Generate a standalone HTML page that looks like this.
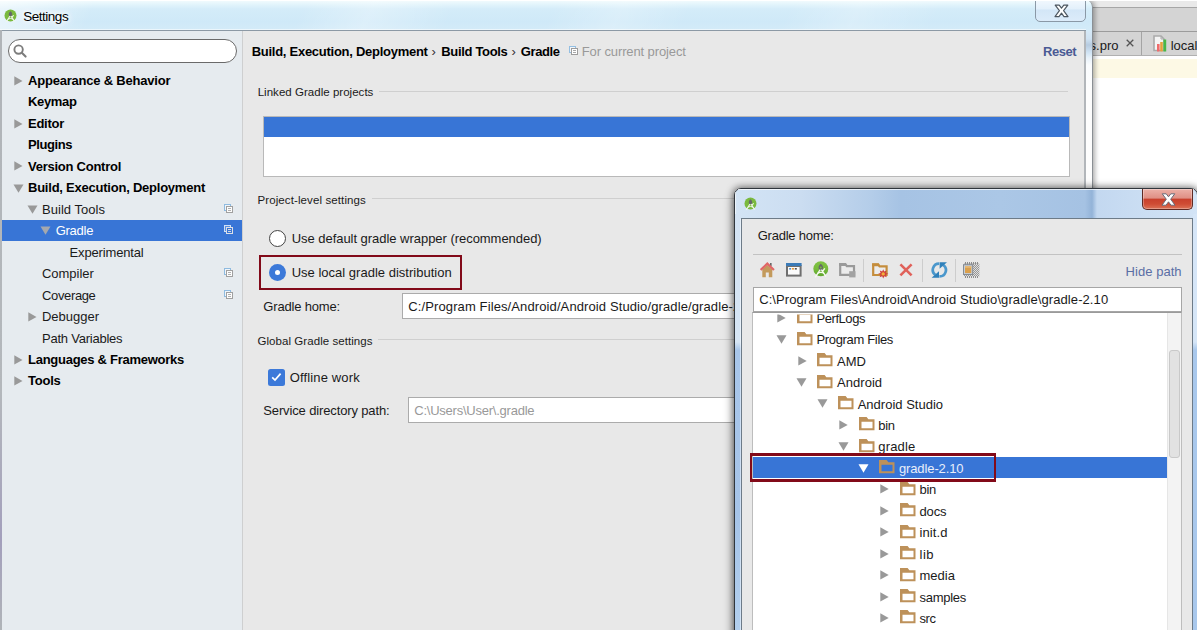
<!DOCTYPE html>
<html><head><meta charset="utf-8"><title>Settings</title>
<style>
html,body{margin:0;padding:0}
body{width:1199px;height:630px;overflow:hidden;position:relative;background:#fff;font-family:"Liberation Sans",sans-serif;}
.a{position:absolute;display:block}
.t{position:absolute;white-space:nowrap}
.glow{text-shadow:0 0 6px #fff,0 0 6px #fff,0 0 10px #fff}
#root{position:absolute;left:0;top:0;width:1199px;height:630px;overflow:hidden}
</style></head><body>
<div id="root">

<!-- ===== IDE background on the right ===== -->
<div class="a" style="left:1086px;top:0;width:113px;height:630px;background:#fff"></div>
<div class="a" style="left:1086px;top:1px;width:113px;height:6px;background:#e9e9e9"></div>
<div class="a" style="left:1086px;top:7px;width:113px;height:1px;background:#a6a6a6"></div>
<div class="a" style="left:1086px;top:8px;width:113px;height:47px;background:#d4d4d4"></div>
<div class="a" style="left:1086px;top:31px;width:113px;height:1px;background:#9c9c9c"></div>
<div class="a" style="left:1086px;top:55px;width:113px;height:1px;background:#b0b0b0"></div>
<div class="a" style="left:1141px;top:32px;width:1px;height:23px;background:#a4a4a4"></div>
<div class="a" style="left:1086px;top:59px;width:113px;height:18.5px;background:#fdf9e5"></div>
<!-- tab close x -->
<svg class="a" style="left:1126px;top:39px" width="8" height="8" viewBox="0 0 8 8"><path d="M0.7 0.7L7.3 7.3M7.3 0.7L0.7 7.3" stroke="#555" stroke-width="1.3" fill="none"/></svg>
<!-- file icon -->
<svg class="a" style="left:1153px;top:35px" width="15" height="17" viewBox="0 0 15 17"><path d="M1 1H8L11 4V15.5H1Z" fill="#f4f4f4" stroke="#aaa" stroke-width="1.6"/><path d="M8 1V4H11" fill="none" stroke="#aaa" stroke-width="1"/><rect x="4" y="9" width="2.6" height="7.5" fill="#ef6b6b"/><rect x="7.2" y="7" width="2.6" height="9.5" fill="#e6a03c"/><rect x="10.4" y="4.5" width="2.8" height="12" fill="#48b848"/></svg>

<span class="t" style="left:1089.6px;top:39.0px;font-size:13px;line-height:13px;color:#1a1a1a;">s.pro</span>
<span class="t" style="left:1170.7px;top:39.0px;font-size:13px;line-height:13px;color:#1a1a1a;">local</span>
<!-- ===== Settings window ===== -->
<div class="a" style="left:0;top:0;width:1091.6px;height:640px;background:linear-gradient(115deg,rgba(255,255,255,.55) 0,rgba(255,255,255,0) 7%,rgba(255,255,255,0) 22%,rgba(255,255,255,.28) 27%,rgba(255,255,255,0) 33%,rgba(255,255,255,0) 40%,rgba(255,255,255,.22) 45%,rgba(255,255,255,0) 50%,rgba(255,255,255,0) 57%,rgba(255,255,255,.22) 62%,rgba(255,255,255,0) 68%,rgba(255,255,255,0) 82%,rgba(255,255,255,.25) 88%,rgba(255,255,255,0) 94%),linear-gradient(180deg,#f4fcfe 0,#e4f5fc 4px,#d4ecf9 9px,#cfe9f8 22px,#d3ebf8 30px);border-right:1px solid #8a8f94;border-top-right-radius:7px;box-shadow:2px 0 5px rgba(0,0,0,.32)"></div>
<div class="a" style="left:0;top:29px;width:1086px;height:1px;background:rgba(255,255,255,.55)"></div>
<!-- left window edge -->
<div class="a" style="left:0;top:30px;width:2px;height:600px;background:linear-gradient(180deg,#b0b4b8 0,#b4b8bc 60%,#a39fbc 85%,#b0b4b8 100%)"></div>
<!-- title icon -->
<svg class="a" style="left:3.6px;top:8.6px" width="13" height="14" viewBox="0 0 13 14"><circle cx="6.5" cy="6.4" r="6" fill="#7aba3e"/><path d="M6.5 2.2C7.9 3.3 8.2 4.4 8.2 5.4C8.2 6.7 7.4 7.6 6.5 7.6C5.6 7.6 4.8 6.7 4.8 5.4C4.8 4.4 5.1 3.3 6.5 2.2Z" fill="#66686a"/><path d="M6 7L2.2 13M7 7L10.6 12.6M8 8.4L9.6 6.2" stroke="#f2f7ea" stroke-width="1.1" fill="none"/><path d="M3.8 10.2Q6.5 8.6 9.2 10.2" stroke="#f2f7ea" stroke-width="1" fill="none"/></svg>
<!-- close button of settings -->
<div class="a" style="left:1035px;top:-2px;width:49px;height:22px;border:1px solid #8a98a6;border-radius:0 0 5px 5px;background:linear-gradient(180deg,#f3f9fe 0,#e3f0fb 45%,#d3e6f7 50%,#dcecfa 100%)"></div>
<svg class="a" style="left:1053.5px;top:4px" width="15" height="14" viewBox="0 0 15 14"><path d="M1.2 1.2H5.2L7.5 4.2L9.8 1.2H13.8L9.6 6.6L14 12.6H10L7.5 9.2L5 12.6H1L5.4 6.6Z" fill="#fff" stroke="#4c5660" stroke-width="1.2" stroke-linejoin="round"/></svg>

<!-- client area -->
<div class="a" style="left:2px;top:30px;width:1084px;height:600px;background:#e8e8e8;border-top:1px solid #8c99a5;box-sizing:border-box"></div>
<div class="a" style="left:1084.2px;top:31px;width:1.8px;height:600px;background:#b2b6ba"></div>
<div class="a" style="left:1086px;top:31px;width:5.6px;height:600px;background:linear-gradient(180deg,#d6e9f7 0,#cfe2f2 8px,#b6cbe0 14px,#d2e5f5 22px,#e8f2fa 27px,#fafcfe 34px,#fdfdfd 60px,#fdfdfd 100%)"></div>
<!-- sidebar -->
<div class="a" style="left:1.5px;top:31px;width:240.5px;height:599px;background:#e6ebef"></div>
<div class="a" style="left:242px;top:31px;width:1px;height:599px;background:#cecfd0"></div>
<!-- search box -->
<div class="a" style="left:8px;top:38.7px;width:228.5px;height:24.3px;box-sizing:border-box;border:1px solid #6a6a6a;border-radius:12px;background:#fff"></div>
<svg class="a" style="left:12.8px;top:43.8px" width="15" height="15" viewBox="0 0 15 15"><circle cx="5.6" cy="5.6" r="4.2" fill="none" stroke="#7c7c7c" stroke-width="1.9"/><path d="M8.8 8.8L12.6 12.6" stroke="#7c7c7c" stroke-width="2.1" stroke-linecap="round"/></svg>
<!-- selected row -->
<div class="a" style="left:1.5px;top:219.7px;width:240.5px;height:21.5px;background:#3875d6"></div>
<svg class="a" style="left:14.2px;top:75.6px" width="9" height="10" viewBox="0 0 9 10"><path d="M0.3 0.3V9.5L8.5 4.9Z" fill="#999"/></svg>
<svg class="a" style="left:14.2px;top:118.5px" width="9" height="10" viewBox="0 0 9 10"><path d="M0.3 0.3V9.5L8.5 4.9Z" fill="#999"/></svg>
<svg class="a" style="left:14.2px;top:161.4px" width="9" height="10" viewBox="0 0 9 10"><path d="M0.3 0.3V9.5L8.5 4.9Z" fill="#999"/></svg>
<svg class="a" style="left:13.0px;top:183.5px" width="11" height="9" viewBox="0 0 11 9"><path d="M0.5 0.5H10.5L5.5 8.7Z" fill="#999"/></svg>
<svg class="a" style="left:27.0px;top:205.0px" width="11" height="9" viewBox="0 0 11 9"><path d="M0.5 0.5H10.5L5.5 8.7Z" fill="#999"/></svg>
<svg class="a" style="left:40.1px;top:226.4px" width="11" height="9" viewBox="0 0 11 9"><path d="M0.5 0.5H10.5L5.5 8.7Z" fill="#a4a8ae"/></svg>
<svg class="a" style="left:28.2px;top:311.7px" width="9" height="10" viewBox="0 0 9 10"><path d="M0.3 0.3V9.5L8.5 4.9Z" fill="#999"/></svg>
<svg class="a" style="left:14.2px;top:354.6px" width="9" height="10" viewBox="0 0 9 10"><path d="M0.3 0.3V9.5L8.5 4.9Z" fill="#999"/></svg>
<svg class="a" style="left:14.2px;top:376.0px" width="9" height="10" viewBox="0 0 9 10"><path d="M0.3 0.3V9.5L8.5 4.9Z" fill="#999"/></svg>
<svg class="a" style="left:224.0px;top:204.0px" width="10" height="10" viewBox="0 0 10 10"><rect x="0.5" y="0.5" width="6" height="6" fill="#f0f5fa" stroke="#8fbbe0" stroke-width="1"/><rect x="2.5" y="2.5" width="6" height="6" fill="#fdfdfd" stroke="#a0a0a0" stroke-width="1"/><path d="M4 4.5H7M4 6.5H7" stroke="#b0b0b0" stroke-width="1"/></svg>
<svg class="a" style="left:224.0px;top:225.0px" width="10" height="10" viewBox="0 0 10 10"><rect x="0.5" y="0.5" width="6" height="6" fill="#5a8fe0" stroke="#cfe0f6" stroke-width="1"/><rect x="2.5" y="2.5" width="6" height="6" fill="#3875d6" stroke="#dcdfe6" stroke-width="1"/><path d="M4 4.5H7M4 6.5H7" stroke="#d4d8e0" stroke-width="1"/></svg>
<svg class="a" style="left:224.0px;top:268.0px" width="10" height="10" viewBox="0 0 10 10"><rect x="0.5" y="0.5" width="6" height="6" fill="#f0f5fa" stroke="#8fbbe0" stroke-width="1"/><rect x="2.5" y="2.5" width="6" height="6" fill="#fdfdfd" stroke="#a0a0a0" stroke-width="1"/><path d="M4 4.5H7M4 6.5H7" stroke="#b0b0b0" stroke-width="1"/></svg>
<svg class="a" style="left:224.0px;top:290.0px" width="10" height="10" viewBox="0 0 10 10"><rect x="0.5" y="0.5" width="6" height="6" fill="#f0f5fa" stroke="#8fbbe0" stroke-width="1"/><rect x="2.5" y="2.5" width="6" height="6" fill="#fdfdfd" stroke="#a0a0a0" stroke-width="1"/><path d="M4 4.5H7M4 6.5H7" stroke="#b0b0b0" stroke-width="1"/></svg>

<!-- content: linked projects -->
<div class="a" style="left:379px;top:91px;width:689px;height:1px;background:#cfcfcf"></div>
<div class="a" style="left:263px;top:116px;width:807px;height:61px;box-sizing:border-box;border:1px solid #b9b9b9;background:#fff"></div>
<div class="a" style="left:264px;top:117px;width:805px;height:20px;background:#3875d6"></div>
<div class="a" style="left:372px;top:198px;width:696px;height:1px;background:#cfcfcf"></div>
<div class="a" style="left:378px;top:339px;width:690px;height:1px;background:#cfcfcf"></div>
<!-- header project icon -->
<svg class="a" style="left:569px;top:46px" width="10" height="10" viewBox="0 0 10 10"><rect x="0.5" y="0.5" width="6" height="6" fill="#f2f6fa" stroke="#93bfe3" stroke-width="1"/><rect x="2.5" y="2.5" width="6" height="6" fill="#fff" stroke="#9c9c9c" stroke-width="1"/><path d="M4 4.5H7M4 6.5H7" stroke="#a8a8a8" stroke-width="1"/></svg>

<!-- radios -->
<div class="a" style="left:268.5px;top:229.7px;width:17px;height:17px;box-sizing:border-box;border:1px solid #444;border-radius:50%;background:#fff"></div>
<div class="a" style="left:259.1px;top:255px;width:202.9px;height:34.5px;box-sizing:border-box;border:solid #820a19;border-width:2.9px 2.2px 2.5px 2.6px"></div>
<div class="a" style="left:268.5px;top:264px;width:17px;height:17px;border-radius:50%;background:#3c79d9"></div>
<div class="a" style="left:274.5px;top:270px;width:5px;height:5px;border-radius:50%;background:#fff"></div>
<!-- gradle home input -->
<div class="a" style="left:402px;top:293px;width:700px;height:26px;box-sizing:border-box;border:1px solid #ababab;background:#fff"></div>
<!-- checkbox -->
<div class="a" style="left:267.5px;top:369px;width:17px;height:17px;border-radius:2.5px;background:#3c79d9"></div>
<svg class="a" style="left:267.5px;top:369px" width="17" height="17" viewBox="0 0 17 17"><path d="M4.2 8.3L7 11L12.6 4.6" fill="none" stroke="#fff" stroke-width="1.7"/></svg>
<!-- service dir input -->
<div class="a" style="left:408px;top:397px;width:700px;height:26px;box-sizing:border-box;border:1px solid #ababab;background:#fff"></div>

<span class="t" style="left:28.0px;top:74.0px;font-size:13px;line-height:13px;color:#000;font-weight:bold;letter-spacing:-0.208px;">Appearance &amp; Behavior</span>
<span class="t" style="left:28.0px;top:95.0px;font-size:13px;line-height:13px;color:#000;font-weight:bold;letter-spacing:-0.346px;">Keymap</span>
<span class="t" style="left:28.0px;top:117.0px;font-size:13px;line-height:13px;color:#000;font-weight:bold;letter-spacing:-0.260px;">Editor</span>
<span class="t" style="left:28.0px;top:138.0px;font-size:13px;line-height:13px;color:#000;font-weight:bold;letter-spacing:-0.422px;">Plugins</span>
<span class="t" style="left:28.0px;top:160.0px;font-size:13px;line-height:13px;color:#000;font-weight:bold;letter-spacing:-0.253px;">Version Control</span>
<span class="t" style="left:28.0px;top:181.0px;font-size:13px;line-height:13px;color:#000;font-weight:bold;letter-spacing:-0.231px;">Build, Execution, Deployment</span>
<span class="t" style="left:42.0px;top:203.0px;font-size:13px;line-height:13px;color:#1a1a1a;letter-spacing:0.033px;">Build Tools</span>
<span class="t" style="left:55.7px;top:224.0px;font-size:13px;line-height:13px;color:#fff;letter-spacing:-0.255px;">Gradle</span>
<span class="t" style="left:69.6px;top:246.0px;font-size:13px;line-height:13px;color:#1a1a1a;letter-spacing:-0.156px;">Experimental</span>
<span class="t" style="left:42.0px;top:267.0px;font-size:13px;line-height:13px;color:#1a1a1a;letter-spacing:-0.027px;">Compiler</span>
<span class="t" style="left:42.0px;top:289.0px;font-size:13px;line-height:13px;color:#1a1a1a;letter-spacing:-0.359px;">Coverage</span>
<span class="t" style="left:42.0px;top:310.0px;font-size:13px;line-height:13px;color:#1a1a1a;letter-spacing:-0.014px;">Debugger</span>
<span class="t" style="left:42.0px;top:332.0px;font-size:13px;line-height:13px;color:#1a1a1a;letter-spacing:-0.228px;">Path Variables</span>
<span class="t" style="left:28.0px;top:353.0px;font-size:13px;line-height:13px;color:#000;font-weight:bold;letter-spacing:-0.265px;">Languages &amp; Frameworks</span>
<span class="t" style="left:28.0px;top:374.0px;font-size:13px;line-height:13px;color:#000;font-weight:bold;letter-spacing:-0.241px;">Tools</span>
<span class="t glow" style="left:23.2px;top:10.0px;font-size:13.5px;line-height:13.5px;color:#000;letter-spacing:-0.473px;">Settings</span>
<span class="t" style="left:251.7px;top:45.0px;font-size:13px;line-height:13px;color:#000;font-weight:bold;letter-spacing:-0.267px;">Build, Execution, Deployment</span>
<span class="t" style="left:431.5px;top:45.0px;font-size:13px;line-height:13px;color:#333;">›</span>
<span class="t" style="left:441.3px;top:45.0px;font-size:13px;line-height:13px;color:#000;font-weight:bold;letter-spacing:-0.328px;">Build Tools</span>
<span class="t" style="left:511.5px;top:45.0px;font-size:13px;line-height:13px;color:#333;">›</span>
<span class="t" style="left:520.8px;top:45.0px;font-size:13px;line-height:13px;color:#000;font-weight:bold;letter-spacing:-0.415px;">Gradle</span>
<span class="t" style="left:581.8px;top:45.0px;font-size:13px;line-height:13px;color:#999;letter-spacing:-0.116px;">For current project</span>
<span class="t" style="left:1043.0px;top:45.0px;font-size:13px;line-height:13px;color:#4a5a94;font-weight:bold;letter-spacing:-0.484px;">Reset</span>
<span class="t" style="left:257.7px;top:87.0px;font-size:11.5px;line-height:11.5px;color:#1a1a1a;letter-spacing:0.029px;">Linked Gradle projects</span>
<span class="t" style="left:257.5px;top:195.0px;font-size:11.5px;line-height:11.5px;color:#1a1a1a;letter-spacing:0.104px;">Project-level settings</span>
<span class="t" style="left:257.5px;top:336.0px;font-size:11.5px;line-height:11.5px;color:#1a1a1a;letter-spacing:0.059px;">Global Gradle settings</span>
<span class="t" style="left:291.7px;top:232.0px;font-size:13px;line-height:13px;color:#1a1a1a;letter-spacing:-0.037px;">Use default gradle wrapper (recommended)</span>
<span class="t" style="left:291.7px;top:266.0px;font-size:13px;line-height:13px;color:#1a1a1a;letter-spacing:0.010px;">Use local gradle distribution</span>
<span class="t" style="left:263.3px;top:300.0px;font-size:13px;line-height:13px;color:#1a1a1a;letter-spacing:-0.180px;">Gradle home:</span>
<span class="t" style="left:408.3px;top:300.0px;font-size:13px;line-height:13px;color:#1a1a1a;letter-spacing:0.111px;">C:/Program Files/Android/Android Studio/gradle/gradle-2.10</span>
<span class="t" style="left:289.8px;top:371.0px;font-size:13px;line-height:13px;color:#1a1a1a;letter-spacing:0.133px;">Offline work</span>
<span class="t" style="left:263.3px;top:404.0px;font-size:13px;line-height:13px;color:#1a1a1a;letter-spacing:-0.137px;">Service directory path:</span>
<span class="t" style="left:414.3px;top:404.0px;font-size:13px;line-height:13px;color:#999;letter-spacing:-0.237px;">C:\Users\User\.gradle</span>

<!-- ===== File chooser dialog ===== -->
<div class="a" style="left:734px;top:188px;width:464px;height:460px;box-sizing:border-box;border:1px solid #30363c;border-radius:7px;background:linear-gradient(90deg,#d3e4f5 0,#cbddf1 66px,#b4cde9 136px,#a6c3e4 166px,#abc7e6 266px,#a5c2e3 350px,#93b3d8 357px,#c3d8f0 362px,#d3e4f6 462px);box-shadow:0 0 7px 1px rgba(0,0,0,.5),0 5px 12px rgba(0,0,0,.3)"></div>
<div class="a" style="left:738px;top:189px;width:456px;height:1px;background:rgba(255,255,255,.7)"></div>
<div class="a" style="left:735px;top:192px;width:1px;height:440px;background:rgba(255,255,255,.6)"></div>
<div class="a" style="left:735px;top:214px;width:6px;height:420px;background:linear-gradient(180deg,#d3e3f4 0,#d6e5f4 128px,#a8c6ea 136px,#a6c4e8 300px,#b2cfee 416px)"></div>
<div class="a" style="left:1193px;top:214px;width:4px;height:420px;background:linear-gradient(180deg,#d6e6f8 0,#d6e6f7 128px,#a9c8ec 136px,#a9c8ec 416px)"></div>
<div class="a" style="left:739.6px;top:219px;width:1.2px;height:420px;background:rgba(255,255,255,.45)"></div>
<!-- dialog icon -->
<svg class="a" style="left:744.4px;top:196.8px" width="13" height="14" viewBox="0 0 13 14"><circle cx="6.5" cy="6.4" r="6" fill="#7aba3e"/><path d="M6.5 2.2C7.9 3.3 8.2 4.4 8.2 5.4C8.2 6.7 7.4 7.6 6.5 7.6C5.6 7.6 4.8 6.7 4.8 5.4C4.8 4.4 5.1 3.3 6.5 2.2Z" fill="#66686a"/><path d="M6 7L2.2 13M7 7L10.6 12.6M8 8.4L9.6 6.2" stroke="#f2f7ea" stroke-width="1.1" fill="none"/><path d="M3.8 10.2Q6.5 8.6 9.2 10.2" stroke="#f2f7ea" stroke-width="1" fill="none"/></svg>
<!-- dialog close -->
<div class="a" style="left:1142px;top:189px;width:51px;height:21px;box-sizing:border-box;border:1px solid #5e2a24;border-top:none;border-radius:0 0 5px 5px;background:linear-gradient(180deg,#ecb1a8 0,#df8f84 46%,#c8402c 50%,#cf4c34 75%,#db7256 100%);box-shadow:inset 0 0 0 1px rgba(255,255,255,.3)"></div>
<svg class="a" style="left:1161px;top:192.5px" width="15" height="13" viewBox="0 0 15 13"><path d="M1.2 0.8H5.2L7.5 3.8L9.8 0.8H13.8L9.7 6.2L14 12.2H10L7.5 8.8L5 12.2H1L5.3 6.2Z" fill="#fff" stroke="#6b6b78" stroke-width="1" stroke-linejoin="round"/></svg>
<!-- dialog client -->
<div class="a" style="left:741px;top:217.5px;width:452px;height:420px;box-sizing:border-box;border:1px solid #6d7b88;background:#e8e8e8"></div>
<div class="a" style="left:753px;top:254px;width:429px;height:1px;background:#c2c2c2"></div>
<!-- toolbar separators -->
<div class="a" style="left:863px;top:259px;width:1px;height:23px;background:#cdcdcd"></div>
<div class="a" style="left:922px;top:259px;width:1px;height:23px;background:#cdcdcd"></div>
<div class="a" style="left:955px;top:259px;width:1px;height:23px;background:#cdcdcd"></div>
<svg class="a" style="left:760px;top:262px" width="15" height="16" viewBox="0 0 15 16"><rect x="10" y="1" width="1.6" height="3" fill="#666"/><path d="M2.3 15.3V7.5L7.3 3L12.3 7.5V15.3H8.8V10.6H5.8V15.3Z" fill="#c39a5c"/><path d="M0.6 8L7.3 1.6L14 8" fill="none" stroke="#e06666" stroke-width="2.2" stroke-linejoin="miter"/></svg>
<svg class="a" style="left:785.8px;top:262.8px" width="16" height="14" viewBox="0 0 16 14"><rect x="1" y="3" width="13.6" height="9.6" fill="#fbfbfb" stroke="#6f6f6f" stroke-width="2"/><rect x="0" y="0" width="15.6" height="3" fill="#3b7bb8"/><rect x="3.2" y="5" width="1.8" height="1.6" fill="#4a90d0"/><rect x="5.8" y="5" width="2.2" height="1.6" fill="#e69a3c"/><rect x="8.8" y="5" width="2" height="1.6" fill="#555"/></svg>
<svg class="a" style="left:812.5px;top:261.4px" width="16" height="17" viewBox="0 0 16 17"><defs><linearGradient id="gg" x1="0" y1="0" x2="0" y2="1"><stop offset="0" stop-color="#80c244"/><stop offset="0.5" stop-color="#78bb3c"/><stop offset="1" stop-color="#5fa62e"/></linearGradient></defs><circle cx="7.8" cy="7.7" r="7.5" fill="url(#gg)"/><path d="M7.8 2.8C9.6 4.2 10 5.6 10 6.8C10 8.4 9 9.6 7.8 9.6C6.6 9.6 5.6 8.4 5.6 6.8C5.6 5.6 6 4.2 7.8 2.8Z" fill="#66686a"/><circle cx="7.8" cy="6.6" r="1" fill="#78bb3c"/><path d="M7.2 8.6L2.2 16.4M8.4 8.6L13 15.6M9.6 10.4L11.8 7.4" stroke="#f6faf0" stroke-width="1.3" fill="none"/><path d="M4.4 12.4Q7.8 10.4 11.2 12.4" stroke="#f6faf0" stroke-width="1.2" fill="none"/></svg>
<svg class="a" style="left:838.8px;top:263px" width="17" height="15" viewBox="0 0 17 15"><path d="M1.2 1.2H6.4L7.8 3.2H15V11.8H1.2Z" fill="#ececec" stroke="#9a9a9a" stroke-width="2.2"/><path d="M0.2 0.2H6.8L8.2 3H0.2Z" fill="#9a9a9a"/><rect x="10.2" y="8.2" width="6.3" height="6.2" fill="#a2a2a2"/></svg>
<svg class="a" style="left:871.6px;top:262.6px" width="17" height="16" viewBox="0 0 17 16"><path d="M1.2 1.4H6.2L7.6 3.4H14.6V12H1.2Z" fill="#ececec" stroke="#c58d3c" stroke-width="2.2"/><path d="M0.2 0.4H6.6L8 3.2H0.2Z" fill="#c58d3c"/><path d="M11.2 6.2L12.2 8.6L14.6 7.4L13.8 9.9L16.4 10.8L13.9 11.7L14.8 14.2L12.3 13.2L11.2 15.6L10.2 13.2L7.6 14.2L8.6 11.7L6.1 10.8L8.6 9.9L7.8 7.4L10.2 8.6Z" fill="#d0403a"/><circle cx="11.2" cy="10.9" r="1.7" fill="#f2b13a"/></svg>
<svg class="a" style="left:899px;top:262.8px" width="14" height="14" viewBox="0 0 14 14"><path d="M1.4 1.4L12.6 12.4M12.6 1.4L1.4 12.4" stroke="#e0615a" stroke-width="2.6" fill="none"/></svg>
<svg class="a" style="left:930.7px;top:261.7px" width="17" height="16" viewBox="0 0 17 16"><path d="M8.2 1.6A6.3 6.3 0 0 0 4.4 13" fill="none" stroke="#4a97cc" stroke-width="2.7"/><path d="M8.4 14.4A6.3 6.3 0 0 0 12.3 3" fill="none" stroke="#4a97cc" stroke-width="2.7"/><path d="M0.6 15.7H8V9.2Z" fill="#2f80ba"/><path d="M16 0.3H8.6V6.8Z" fill="#2f80ba"/></svg>
<svg class="a" style="left:962.8px;top:261.8px" width="17" height="16" viewBox="0 0 17 16"><defs><pattern id="ck" width="2" height="2" patternUnits="userSpaceOnUse"><rect width="1" height="1" fill="#969696"/><rect x="1" y="1" width="1" height="1" fill="#969696"/></pattern><pattern id="tk" width="2" height="2" patternUnits="userSpaceOnUse"><rect width="1" height="2" fill="#8c8c8c"/></pattern></defs><rect x="1" y="1.6" width="15.4" height="12.8" fill="#dedede"/><rect x="1" y="1.6" width="15.4" height="12.8" fill="url(#ck)"/><rect x="2" y="0" width="14" height="2" fill="url(#tk)"/><rect x="2" y="14" width="14" height="2" fill="url(#tk)"/><rect x="0.5" y="2.7" width="9.2" height="9.8" fill="#c6ced8" stroke="#858b92" stroke-width="1"/><rect x="2" y="4.2" width="6.3" height="6.9" fill="#dba04c"/><rect x="2" y="4.2" width="6.3" height="1.5" fill="#e9bd7c"/></svg>
<!-- path field -->
<div class="a" style="left:753px;top:286.5px;width:429px;height:25.5px;box-sizing:border-box;border:1px solid #a6a6a6;background:#fff"></div>
<!-- tree -->
<div class="a" style="left:752.4px;top:312px;width:429.6px;height:330px;box-sizing:border-box;border:1px solid #bdbdbd;border-top-color:#9a9a9a;background:#fff"></div>
<div class="a" style="left:753px;top:456.8px;width:414px;height:21.3px;background:#3875d6"></div>
<div class="a" id="tree" style="left:754px;top:313px;width:413px;height:317px;overflow:hidden;clip-path:inset(1.5px 0 0 0)">
<svg class="a" style="left:23.2px;top:-0.3px" width="9" height="10" viewBox="0 0 9 10"><path d="M0.3 0.3V9.6L8.7 4.95Z" fill="#999"/></svg>
<svg class="a" style="left:42.7px;top:-2.9px" width="16" height="14" viewBox="0 0 16 14"><path d="M0 0H7.6L9.4 2.3H15.5V13.2H0Z" fill="#fff"/><path fill-rule="evenodd" d="M0 0H7.6L9.4 2.3H15.5V13.2H0Z M2.5 4.7H13.5V11.2H2.5Z" fill="#bd915a"/></svg>
<svg class="a" style="left:21.7px;top:21.8px" width="11" height="9" viewBox="0 0 11 9"><path d="M0.5 0.3H10.5L5.5 8.7Z" fill="#999"/></svg>
<svg class="a" style="left:42.7px;top:18.6px" width="16" height="14" viewBox="0 0 16 14"><path d="M0 0H7.6L9.4 2.3H15.5V13.2H0Z" fill="#fff"/><path fill-rule="evenodd" d="M0 0H7.6L9.4 2.3H15.5V13.2H0Z M2.5 4.7H13.5V11.2H2.5Z" fill="#bd915a"/></svg>
<svg class="a" style="left:43.8px;top:42.6px" width="9" height="10" viewBox="0 0 9 10"><path d="M0.3 0.3V9.6L8.7 4.95Z" fill="#999"/></svg>
<svg class="a" style="left:63.3px;top:40.0px" width="16" height="14" viewBox="0 0 16 14"><path d="M0 0H7.6L9.4 2.3H15.5V13.2H0Z" fill="#fff"/><path fill-rule="evenodd" d="M0 0H7.6L9.4 2.3H15.5V13.2H0Z M2.5 4.7H13.5V11.2H2.5Z" fill="#bd915a"/></svg>
<svg class="a" style="left:42.3px;top:64.7px" width="11" height="9" viewBox="0 0 11 9"><path d="M0.5 0.3H10.5L5.5 8.7Z" fill="#999"/></svg>
<svg class="a" style="left:63.3px;top:61.5px" width="16" height="14" viewBox="0 0 16 14"><path d="M0 0H7.6L9.4 2.3H15.5V13.2H0Z" fill="#fff"/><path fill-rule="evenodd" d="M0 0H7.6L9.4 2.3H15.5V13.2H0Z M2.5 4.7H13.5V11.2H2.5Z" fill="#bd915a"/></svg>
<svg class="a" style="left:62.9px;top:86.1px" width="11" height="9" viewBox="0 0 11 9"><path d="M0.5 0.3H10.5L5.5 8.7Z" fill="#999"/></svg>
<svg class="a" style="left:83.9px;top:82.9px" width="16" height="14" viewBox="0 0 16 14"><path d="M0 0H7.6L9.4 2.3H15.5V13.2H0Z" fill="#fff"/><path fill-rule="evenodd" d="M0 0H7.6L9.4 2.3H15.5V13.2H0Z M2.5 4.7H13.5V11.2H2.5Z" fill="#bd915a"/></svg>
<svg class="a" style="left:85.0px;top:107.0px" width="9" height="10" viewBox="0 0 9 10"><path d="M0.3 0.3V9.6L8.7 4.95Z" fill="#999"/></svg>
<svg class="a" style="left:104.5px;top:104.4px" width="16" height="14" viewBox="0 0 16 14"><path d="M0 0H7.6L9.4 2.3H15.5V13.2H0Z" fill="#fff"/><path fill-rule="evenodd" d="M0 0H7.6L9.4 2.3H15.5V13.2H0Z M2.5 4.7H13.5V11.2H2.5Z" fill="#bd915a"/></svg>
<svg class="a" style="left:83.5px;top:129.1px" width="11" height="9" viewBox="0 0 11 9"><path d="M0.5 0.3H10.5L5.5 8.7Z" fill="#999"/></svg>
<svg class="a" style="left:104.5px;top:125.8px" width="16" height="14" viewBox="0 0 16 14"><path d="M0 0H7.6L9.4 2.3H15.5V13.2H0Z" fill="#fff"/><path fill-rule="evenodd" d="M0 0H7.6L9.4 2.3H15.5V13.2H0Z M2.5 4.7H13.5V11.2H2.5Z" fill="#bd915a"/></svg>
<svg class="a" style="left:104.1px;top:150.5px" width="11" height="9" viewBox="0 0 11 9"><path d="M0.5 0.3H10.5L5.5 8.7Z" fill="#fff"/></svg>
<svg class="a" style="left:125.1px;top:147.3px" width="16" height="14" viewBox="0 0 16 14"><path d="M0 0H7.6L9.4 2.3H15.5V13.2H0Z" fill="none"/><path fill-rule="evenodd" d="M0 0H7.6L9.4 2.3H15.5V13.2H0Z M2.5 4.7H13.5V11.2H2.5Z" fill="#bd915a"/></svg>
<svg class="a" style="left:126.2px;top:171.4px" width="9" height="10" viewBox="0 0 9 10"><path d="M0.3 0.3V9.6L8.7 4.95Z" fill="#999"/></svg>
<svg class="a" style="left:145.7px;top:168.8px" width="16" height="14" viewBox="0 0 16 14"><path d="M0 0H7.6L9.4 2.3H15.5V13.2H0Z" fill="#fff"/><path fill-rule="evenodd" d="M0 0H7.6L9.4 2.3H15.5V13.2H0Z M2.5 4.7H13.5V11.2H2.5Z" fill="#bd915a"/></svg>
<svg class="a" style="left:126.2px;top:192.8px" width="9" height="10" viewBox="0 0 9 10"><path d="M0.3 0.3V9.6L8.7 4.95Z" fill="#999"/></svg>
<svg class="a" style="left:145.7px;top:190.2px" width="16" height="14" viewBox="0 0 16 14"><path d="M0 0H7.6L9.4 2.3H15.5V13.2H0Z" fill="#fff"/><path fill-rule="evenodd" d="M0 0H7.6L9.4 2.3H15.5V13.2H0Z M2.5 4.7H13.5V11.2H2.5Z" fill="#bd915a"/></svg>
<svg class="a" style="left:126.2px;top:214.2px" width="9" height="10" viewBox="0 0 9 10"><path d="M0.3 0.3V9.6L8.7 4.95Z" fill="#999"/></svg>
<svg class="a" style="left:145.7px;top:211.6px" width="16" height="14" viewBox="0 0 16 14"><path d="M0 0H7.6L9.4 2.3H15.5V13.2H0Z" fill="#fff"/><path fill-rule="evenodd" d="M0 0H7.6L9.4 2.3H15.5V13.2H0Z M2.5 4.7H13.5V11.2H2.5Z" fill="#bd915a"/></svg>
<svg class="a" style="left:126.2px;top:235.7px" width="9" height="10" viewBox="0 0 9 10"><path d="M0.3 0.3V9.6L8.7 4.95Z" fill="#999"/></svg>
<svg class="a" style="left:145.7px;top:233.1px" width="16" height="14" viewBox="0 0 16 14"><path d="M0 0H7.6L9.4 2.3H15.5V13.2H0Z" fill="#fff"/><path fill-rule="evenodd" d="M0 0H7.6L9.4 2.3H15.5V13.2H0Z M2.5 4.7H13.5V11.2H2.5Z" fill="#bd915a"/></svg>
<svg class="a" style="left:126.2px;top:257.1px" width="9" height="10" viewBox="0 0 9 10"><path d="M0.3 0.3V9.6L8.7 4.95Z" fill="#999"/></svg>
<svg class="a" style="left:145.7px;top:254.5px" width="16" height="14" viewBox="0 0 16 14"><path d="M0 0H7.6L9.4 2.3H15.5V13.2H0Z" fill="#fff"/><path fill-rule="evenodd" d="M0 0H7.6L9.4 2.3H15.5V13.2H0Z M2.5 4.7H13.5V11.2H2.5Z" fill="#bd915a"/></svg>
<svg class="a" style="left:126.2px;top:278.6px" width="9" height="10" viewBox="0 0 9 10"><path d="M0.3 0.3V9.6L8.7 4.95Z" fill="#999"/></svg>
<svg class="a" style="left:145.7px;top:276.0px" width="16" height="14" viewBox="0 0 16 14"><path d="M0 0H7.6L9.4 2.3H15.5V13.2H0Z" fill="#fff"/><path fill-rule="evenodd" d="M0 0H7.6L9.4 2.3H15.5V13.2H0Z M2.5 4.7H13.5V11.2H2.5Z" fill="#bd915a"/></svg>
<svg class="a" style="left:126.2px;top:300.0px" width="9" height="10" viewBox="0 0 9 10"><path d="M0.3 0.3V9.6L8.7 4.95Z" fill="#999"/></svg>
<svg class="a" style="left:145.7px;top:297.4px" width="16" height="14" viewBox="0 0 16 14"><path d="M0 0H7.6L9.4 2.3H15.5V13.2H0Z" fill="#fff"/><path fill-rule="evenodd" d="M0 0H7.6L9.4 2.3H15.5V13.2H0Z M2.5 4.7H13.5V11.2H2.5Z" fill="#bd915a"/></svg>
<span class="t" style="left:62.5px;top:-1.0px;font-size:13px;line-height:13px;color:#1a1a1a;letter-spacing:-0.443px;">PerfLogs</span>
<span class="t" style="left:62.5px;top:20.0px;font-size:13px;line-height:13px;color:#1a1a1a;letter-spacing:-0.340px;">Program Files</span>
<span class="t" style="left:83.1px;top:42.0px;font-size:13px;line-height:13px;color:#1a1a1a;letter-spacing:-0.097px;">AMD</span>
<span class="t" style="left:83.1px;top:63.0px;font-size:13px;line-height:13px;color:#1a1a1a;letter-spacing:0.027px;">Android</span>
<span class="t" style="left:103.7px;top:85.0px;font-size:13px;line-height:13px;color:#1a1a1a;letter-spacing:0.008px;">Android Studio</span>
<span class="t" style="left:124.3px;top:106.0px;font-size:13px;line-height:13px;color:#1a1a1a;letter-spacing:-0.286px;">bin</span>
<span class="t" style="left:124.3px;top:127.0px;font-size:13px;line-height:13px;color:#1a1a1a;letter-spacing:0.143px;">gradle</span>
<span class="t" style="left:144.9px;top:149.0px;font-size:13px;line-height:13px;color:#e8eefa;letter-spacing:-0.107px;">gradle-2.10</span>
<span class="t" style="left:165.5px;top:170.0px;font-size:13px;line-height:13px;color:#1a1a1a;letter-spacing:-0.286px;">bin</span>
<span class="t" style="left:165.5px;top:192.0px;font-size:13px;line-height:13px;color:#1a1a1a;letter-spacing:-0.117px;">docs</span>
<span class="t" style="left:165.5px;top:213.0px;font-size:13px;line-height:13px;color:#1a1a1a;letter-spacing:0.089px;">init.d</span>
<span class="t" style="left:165.5px;top:235.0px;font-size:13px;line-height:13px;color:#1a1a1a;letter-spacing:0.495px;">lib</span>
<span class="t" style="left:165.5px;top:256.0px;font-size:13px;line-height:13px;color:#1a1a1a;letter-spacing:0.016px;">media</span>
<span class="t" style="left:165.5px;top:278.0px;font-size:13px;line-height:13px;color:#1a1a1a;letter-spacing:-0.275px;">samples</span>
<span class="t" style="left:165.5px;top:299.0px;font-size:13px;line-height:13px;color:#1a1a1a;letter-spacing:-0.448px;">src</span>
</div>
<!-- scrollbar -->
<div class="a" style="left:1167px;top:313px;width:14px;height:317px;background:#f3f3f3;border-left:1px solid #e6e6e6;box-sizing:border-box"></div>
<div class="a" style="left:1169px;top:350px;width:10.5px;height:108px;box-sizing:border-box;border:1px solid #c9c9c9;border-radius:3px;background:#e2e2e2"></div>
<!-- red highlight box in tree -->
<div class="a" style="left:750px;top:453px;width:246px;height:29px;box-sizing:border-box;border:solid #820a19;border-width:3px 2.2px 3px 2.8px"></div>

<span class="t" style="left:757.7px;top:229.0px;font-size:13px;line-height:13px;color:#1a1a1a;letter-spacing:-0.230px;">Gradle home:</span>
<span class="t" style="left:1125.6px;top:265.0px;font-size:13px;line-height:13px;color:#5a6ea5;letter-spacing:0.038px;">Hide path</span>
<span class="t" style="left:759.2px;top:293.0px;font-size:13px;line-height:13px;color:#1a1a1a;letter-spacing:0.087px;">C:\Program Files\Android\Android Studio\gradle\gradle-2.10</span>
<div class="a" style="left:0;top:0;width:1199px;height:1px;background:#fff"></div>
<div class="a" style="left:1197px;top:0;width:2px;height:630px;background:#fff"></div>
</div>
</body></html>
